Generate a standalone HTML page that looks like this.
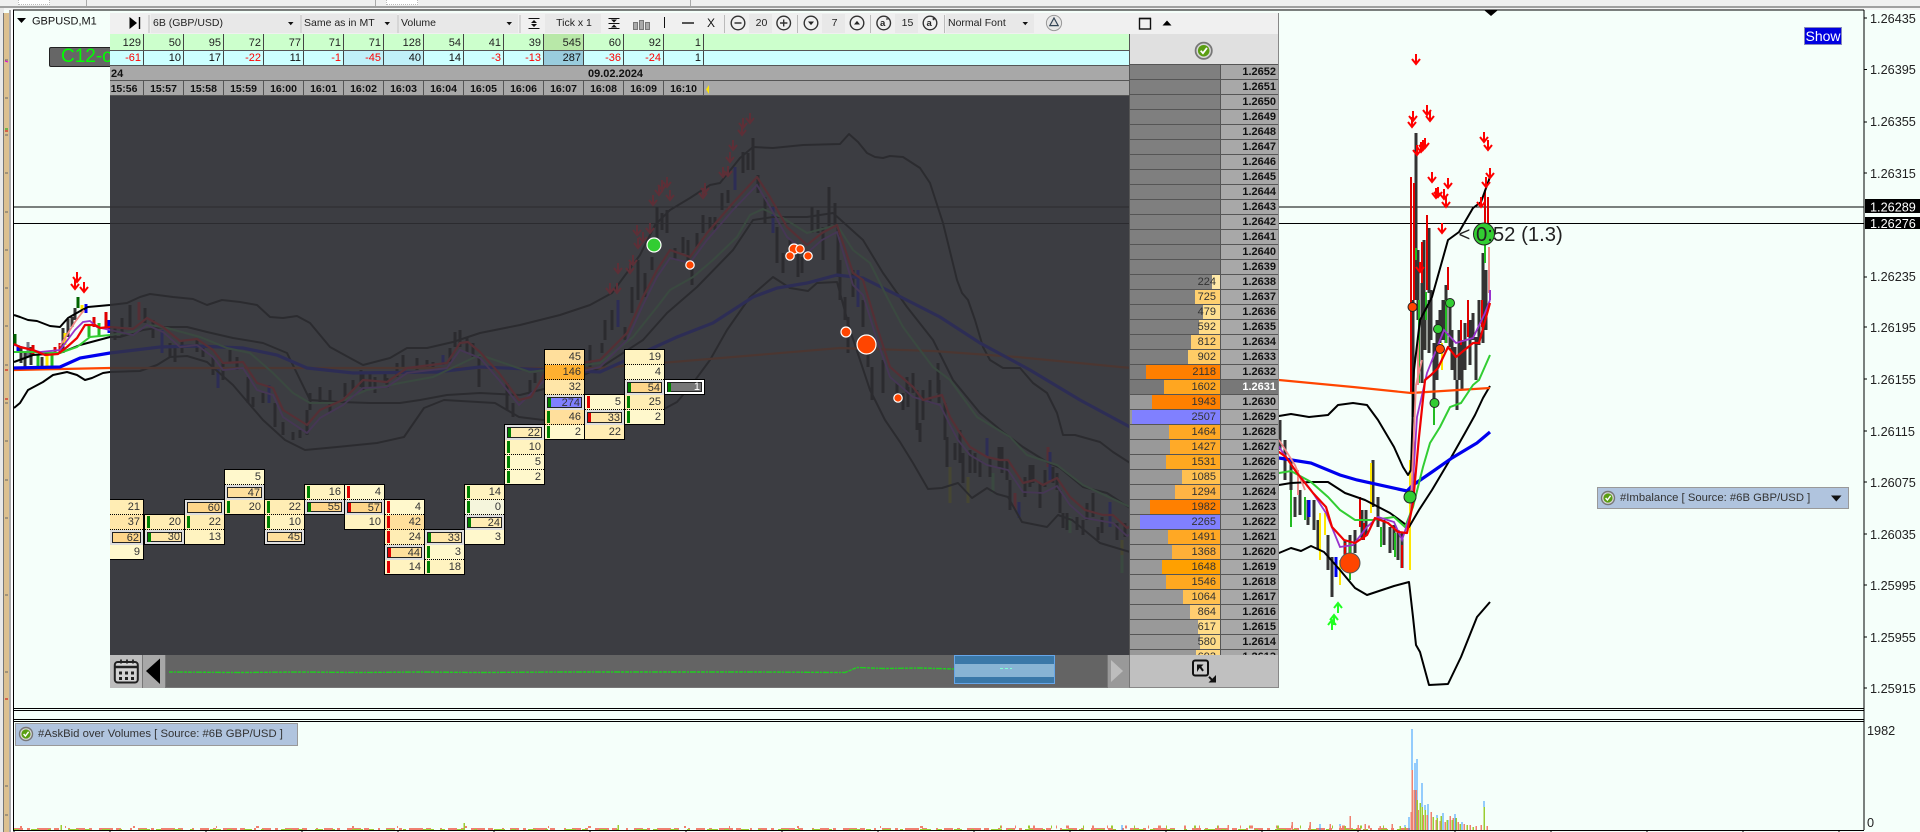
<!DOCTYPE html>
<html><head><meta charset="utf-8"><title>GBPUSD,M1</title>
<style>
html,body{margin:0;padding:0;width:1920px;height:832px;overflow:hidden;background:#f5fffa;font-family:"Liberation Sans",sans-serif}
.ab{position:absolute}
svg{position:absolute;left:0;top:0}
.lt{--c:#333;--k:#000;--r:#e00000;--m:#f00000;--g:#22bb22;--l:#32cd32;--y:#ffe600;--b:#0000ee;--p:#f08888;--v:#9932cc;--o:#ff4500;--a:#ff0000;--dg:#006400;--gy:#778}
.dm{--c:#000;--k:#000;--r:#960e14;--m:#960e14;--g:#356b3b;--l:#356b3b;--y:#60600a;--b:#070786;--p:#8a3a40;--v:#602786;--o:#722709;--a:#b20e1e;--dg:#0a3a10;--gy:#222}
.sc{stroke:var(--c)}.sk{stroke:var(--k)}.sr{stroke:var(--r)}.sm{stroke:var(--m)}.sg{stroke:var(--g)}.sl{stroke:var(--l)}.sy{stroke:var(--y)}.sb{stroke:var(--b)}.sp{stroke:var(--p)}.sv{stroke:var(--v)}.so{stroke:var(--o)}.sa{stroke:var(--a)}.sd{stroke:var(--dg)}.sx{stroke:var(--gy)}
.row{position:absolute;left:110px;width:1019px;display:flex;font-size:11px;box-sizing:border-box}
.row div{width:40px;flex:none;box-sizing:border-box;border-right:1px solid #444;text-align:right;padding-right:2px}
.row div:first-child{width:34px}
.row div:last-child{width:auto;flex:1;border-right:0}
.gr{top:34px;height:17px;background:#ccffcc;color:#222;line-height:18px;border-bottom:1px solid #555}
.cy{top:51px;height:15px;background:#ccffff;color:#111;line-height:15px;border-bottom:1px solid #555}
.cy .n{color:#f00}
.tm{top:81px;height:15px;background:#a8a8a8;color:#111;line-height:16px;font-weight:bold;font-size:10.5px;border-bottom:1px solid #555}
.tm div{text-align:center;padding:0;border-right:1px solid #555}
.tm div:first-child{padding-right:5px}
.g{position:absolute;box-sizing:content-box;width:39px;border:1px solid #000;font-size:11px;color:#333}
.c{position:relative;height:14px;border-bottom:1px dotted #000;text-align:right;padding-right:3px;line-height:15px}
.c:last-child{border-bottom:0}
.x{height:15px;border-bottom:0;line-height:16px;padding-right:4px;box-shadow:inset 0 0 0 2px #ddd,inset 0 0 0 3px #222}
.x:last-child{height:14px;line-height:15px}
.c i{position:absolute;left:2px;top:1px;width:3px;height:12px;background:#008000}
.c i.r{background:#e00000}
.x i{left:3px;top:3px;height:9px}
.a{background:#fff8cc}.b{background:#fff3c0}.d{background:#ffedb4}.e{background:#ffe6a8}.f{background:#ffdf9c}.h{background:#ffd68a}
.pr{position:absolute;left:1129px;top:65px;width:150px;height:590px;overflow:hidden;background:#555;font-size:11px;border-left:1px solid #555;box-sizing:border-box}
.r{position:relative;height:15px}
.r s{position:absolute;left:0;top:0;width:90px;height:14px;background:#7f7f7f;text-decoration:none;overflow:hidden}
.r.l s{background:#999}
.r s b{position:absolute;right:0;top:0;height:14px;font-weight:normal}
.r s em{position:absolute;right:4px;top:0;font-style:normal;line-height:15px;color:#333}
.r u{position:absolute;left:91px;top:0;width:58px;height:14px;background:#a8a8a8;text-decoration:none;font-weight:bold;color:#111;text-align:right;padding-right:3px;box-sizing:border-box;line-height:15px}
.r.cur u{background:#787878;color:#fff}
.box{position:absolute;background:#e8e8e8;top:14px;height:19px;font-size:10.5px;line-height:19px;color:#222;padding-left:2px;box-sizing:border-box}
.lbl{position:absolute;background:#b0c4de;border:1px solid #999;box-sizing:border-box;color:#333;font-size:11.3px}
</style></head>
<body>
<!-- top strip -->
<div class="ab" style="left:0;top:0;width:1920px;height:6px;background:#f0f0f0"></div>
<div class="ab" style="left:0;top:6px;width:1920px;height:2px;background:#a0a0a0"></div>
<div class="ab" style="left:0;top:8px;width:1920px;height:2px;background:#f4f4f4"></div>
<div class="ab" style="left:18px;top:0;width:30px;height:4px;background:#fff;border:1px dotted #bbb;border-top:0"></div>
<div class="ab" style="left:386px;top:0;width:30px;height:4px;background:#fff;border:1px dotted #bbb;border-top:0"></div>
<div class="ab" style="left:86px;top:0;width:1px;height:6px;background:#aaa"></div>
<div class="ab" style="left:375px;top:0;width:1px;height:6px;background:#aaa"></div>
<div class="ab" style="left:690px;top:0;width:1px;height:6px;background:#aaa"></div>
<!-- left strip -->
<div class="ab" style="left:0;top:8px;width:4px;height:824px;background:#e8e8e8"></div>
<div class="ab" style="left:3px;top:13px;width:6px;height:819px;background:#dcc08f;border-left:1px solid #777;box-sizing:border-box"></div>
<div class="ab" style="left:9px;top:10px;width:2px;height:822px;background:#aaa"></div>
<div class="ab" style="left:11px;top:10px;width:2px;height:822px;background:#fff"></div>

<!-- main chart -->
<svg width="1920" height="832" viewBox="0 0 1920 832" fill="none">
<defs>
<g id="da"><path d="M0 -5V4M-4 0L0 5L4 0" stroke-width="2"/></g>
<g id="ua"><path d="M0 5V-4M-4 0L0 -5L4 0" stroke-width="2"/></g>
<clipPath id="pc"><rect x="110" y="95" width="1019" height="560"/></clipPath>
<g id="ch" fill="none">
<path class="sk" d="M14 207H1864M14 223.5H1864" stroke-width="1.3" shape-rendering="crispEdges"/>
<!-- candles -->
<g stroke-width="3" shape-rendering="crispEdges">
<path class="sc" d="M21 347V363M25 353V367M31 347V365M42 357V367M63 328V353M68 319V337M72 317V327M75 308V320M115 327V340M122 318V337M130 305V327M145 308V323M153 320V338M170 343V357M175 347V362M182 340V353M197 340V352M203 347V357M213 357V375M223 363V380M230 350V363M237 357V370M248 377V403M253 397V407M263 393V403M275 403V427M283 422V435M293 432V440M300 430V438M307 410V435M310 393V410M320 387V403M330 390V412M345 383V397M353 380V390M361 370V387M363 373V390M370 373V388M375 377V393M385 373V383M387 378V388M397 363V377M403 355V368M417 358V370M427 360V368M433 362V372M450 348V362M455 332V347M460 330V347M467 338V353M473 343V357M479 355V387M507 383V410M513 403V417M530 380V395M535 373V383M590 345V370M602 343V353M605 320V340M612 310V330M625 327V340M632 287V313M638 260V300M645 273V297M652 257V270M657 207V240M662 213V230M667 210V233M675 248V260M683 237V253M688 240V260M692 267V285M697 233V247M703 215V233M710 217V230M715 217V230M722 193V210M728 190V203M743 152V173M748 153V170M753 138V170M758 175V193M765 197V223M777 227V263M783 253V273M790 240V260M798 250V277M802 257V273M812 207V233M818 210V233M823 227V260M829 187V227M835 203V227M838 227V277M840 260V300M845 297V320M848 317V353M853 270V297M863 300V327M868 353V367M872 367V400M883 360V393M897 383V400M907 377V393M913 373V393M930 380V393M938 363V393M903 393V410M908 387V407M917 390V430M920 423V442M923 390V420M930 380V403M939 380V403M945 403V440M947 437V467M955 443V460M960 430V463M963 453V483M970 450V473M975 453V473M980 460V477M990 457V477M999 447V467M1002 447V473M1007 460V480M1010 480V510M1025 477V497M1030 465V487M1033 465V483M1040 483V508M1045 470V487M1053 467V483M1057 473V490M1060 490V513M1063 513V528M1067 513V530M1077 517V530M1083 520V535M1087 503V520M1093 493V517M1098 527V540M1102 517V533M1117 523V540M1125 523V537M1280 420V450M1285 440V480M1291 460V490M1295 497V517M1300 490V515M1308 500V525M1314 500V530M1318 520V550M1328 535V570M1332 557V597M1345 540V570M1350 535V560M1355 530V553M1362 510V540M1366 510V535M1373 460V507M1378 497V527M1384 520V545M1390 527V553M1394 525V550M1398 530V560M1402 533V568M1413 300V417M1413 433V500M1416 133V300M1418 250V320M1422 283V383M1424 240V300M1425 300V350M1429 228V293M1429 300V353M1431 290V340M1434 343V407M1437 320V380M1440 310V343M1443 300V340M1446 285V343M1450 303V347M1452 330V370M1455 347V380M1457 380V410M1459 330V380M1462 340V390M1465 323V370M1470 320V365M1473 313V340M1476 337V380M1479 300V345M1483 253V343M1486 270V330"/>
<path class="sd" d="M15 334V345M78 297V308"/>
<path class="sx" d="M28 342V357"/>
<path class="sr" d="M33 345V355M55 347V355M60 343V353M94 317V327M106 312V327M139 302V320M1015 493V510M1048 447V467"/>
<path class="sr" stroke-width="2.4" d="M1345 543V567M1360 497V527M1364 523V540M1402 545V568M1411 177V393M1414 183V300M1427 215V290M1422 242V283M1448 267V290M1485 190V223M1488 197V223M1461 320V345M1468 300V337M1482 300V327"/>
<path class="sg" d="M38 355V368M52 352V367M89 325V337M99 323V337M993 473V493M1070 517V533M1122 550V573"/>
<path class="sg" stroke-width="2" d="M1291 490V527M1305 497V520M1350 543V580M1381 527V547M1395 533V557M1416 248V260M1419 300V383M1426 292V320M1434 407V425M1446 300V343M1485 245V263"/>
<path class="sy" d="M47 355V367M65 333V345M82 305V313M950 467V503M968 477V503M1122 540V555"/>
<path class="sy" stroke-width="2" d="M1320 513V560M1325 513V535M1340 560V585M1371 463V513M1410 460V570M1442 343V370"/>
<path class="sb" d="M18 345V352M86 304V313M109 320V333M162 330V353M218 367V388M269 385V403M443 355V365M618 300V327M735 167V190M773 207V233M858 270V307M987 438V457M1019 502V518M1050 452V480M1110 502V527M1309 500V517M1336 557V577"/>
<path class="sp" stroke-width="2" d="M1298 470V495M1418 340V385M1489 247V293"/>
<path class="sv" stroke-width="2" d="M1490 290V300"/>
</g>
<!-- bands -->
<g class="sk" stroke-width="2" stroke-linejoin="round">
<polyline points="14,315 20,317 28,320 37,321 50,326 60,327 68,318 82,310 88,307 110,305 127,303 140,297 150,294 173,297 193,299 207,305 222,300 240,302 257,305 270,317 283,318 297,316 310,323 330,347 350,358 363,365 390,358 407,348 427,348 453,342 480,333 520,325 560,315 590,305 612,293 640,255 655,225 670,210 690,198 710,185 720,183 740,158 753,147 773,148 803,145 840,144 849,134 858,142 867,153 875,157 883,158 890,156 903,157 920,168 930,183 943,223 957,280 962,293 968,300 975,320 983,347 990,360 1003,368 1020,368 1033,383 1047,393 1057,413 1063,435 1075,435 1100,442 1113,452 1130,463 1279,416 1291,414 1309,417 1328,415 1338,405 1353,403 1367,405 1378,420 1394,447 1403,467 1408,475 1411,470 1414,370 1420,320 1432,297 1448,240 1459,232 1473,208 1481,202 1490,177"/>
<polyline points="14,362 33,355 60,353 80,345 110,337 120,337 143,330 163,327 187,327 207,332 233,338 263,343 287,353 310,400 340,402 370,403 400,403 420,400 447,395 480,393 520,395 560,385 600,368 643,340 667,313 697,287 733,250 753,220 773,217 807,217 833,213 863,240 883,273 907,307 933,340 953,380 980,413 1003,432 1023,447 1047,462 1060,468 1083,487 1107,493 1130,508 1279,485 1291,483 1311,482 1328,482 1345,493 1365,500 1390,513 1409,527 1419,510 1432,490 1448,463 1465,433 1475,415 1483,398 1490,386"/>
<polyline points="14,408 20,403 28,390 43,382 53,375 67,372 77,375 85,380 92,378 103,373 110,372 140,371 157,365 170,357 187,356 207,362 233,385 263,420 285,440 305,450 337,447 377,443 404,437 424,408 444,400 495,403 519,417 543,420 600,428 640,422 677,402 693,383 710,360 727,330 750,297 773,277 790,288 808,291 817,283 837,282 850,330 870,390 885,420 900,442 913,463 928,489 942,488 958,483 972,498 987,488 997,494 1008,497 1022,522 1047,527 1058,515 1072,520 1100,543 1130,552 1279,553 1291,548 1301,551 1311,546 1324,552 1340,570 1355,588 1367,595 1382,590 1394,586 1409,582 1413,617 1416,645 1420,652 1429,685 1448,684 1461,657 1477,617 1490,602"/>
</g>
<polyline class="so" stroke-width="2.2" points="14,370 110,368 480,368 600,368 733,357 840,348 933,351 1017,357 1120,367 1279,380 1353,387 1411,393 1490,388"/>
<polyline class="sb" stroke-width="3.2" points="14,368 60,367 80,358 110,353 160,347 197,346 243,348 277,355 307,368 353,373 437,372 480,367 600,372 677,337 713,323 753,297 777,288 807,283 837,275 863,278 893,293 940,317 980,343 1030,370 1080,400 1130,427 1279,458 1311,463 1340,475 1357,480 1407,491 1413,485 1432,472 1452,458 1477,443 1490,432"/>
<polyline class="sl" stroke-width="2" points="14,352 33,352 60,353 77,347 90,337 110,335 133,332 150,325 167,328 200,337 227,348 250,353 273,373 293,393 310,403 337,403 367,390 400,383 433,377 473,358 480,355 530,372 600,363 633,337 657,307 670,290 693,277 713,260 737,237 750,215 763,209 783,218 807,233 837,225 853,250 870,263 887,297 903,327 920,350 933,367 950,380 977,417 1010,437 1027,455 1057,465 1083,485 1130,507 1279,473 1291,471 1311,482 1328,497 1340,510 1355,520 1373,520 1394,517 1405,527 1413,507 1423,467 1430,443 1440,427 1450,407 1461,403 1473,385 1479,380 1490,355"/>
<polyline class="sv" stroke-width="1.8" points="14,345 40,352 60,350 75,330 83,322 90,321 97,327 110,330 133,335 147,325 163,332 180,347 197,345 213,357 223,370 243,368 257,390 273,395 283,417 307,433 320,418 343,405 363,388 387,387 407,373 447,368 460,350 480,358 499,380 519,405 545,380 600,367 627,340 643,305 657,277 670,258 690,263 707,240 733,210 757,185 770,207 787,237 807,253 822,240 837,232 853,285 863,295 877,340 890,377 913,397 940,405 950,425 958,440 970,455 987,465 1008,470 1023,492 1043,493 1057,486 1070,505 1085,518 1113,523 1127,536 1279,447 1295,470 1311,490 1326,513 1340,547 1353,545 1367,527 1378,517 1394,522 1402,540 1411,513 1417,417 1427,373 1444,330 1456,343 1473,338 1485,313 1490,300"/>
<polyline class="sp" stroke-width="1.8" points="60,346 75,322 84,310"/>
<polyline class="sp" stroke-width="1.8" points="1279,440 1295,465 1305,490"/>
<polyline class="sp" stroke-width="1.8" points="1411,500 1416,385 1422,360"/>
<polyline class="sm" stroke-width="2.2" stroke-linejoin="round" points="14,344 20,347 33,350 45,355 58,354 67,347 77,338 85,325 95,325 100,328 110,327 133,329 147,318 163,327 180,341 197,339 213,350 223,363 243,362 257,383 273,388 283,410 307,425 320,410 343,400 363,380 387,382 407,368 447,363 460,343 468,342 480,352 499,373 519,400 531,397 545,373 570,365 600,360 627,333 643,297 657,270 670,250 690,257 707,233 733,203 757,177 770,197 787,227 807,245 822,233 837,225 853,273 863,280 877,327 890,367 913,387 923,400 942,395 950,417 958,430 970,447 987,457 1000,460 1008,460 1023,483 1035,480 1043,485 1057,478 1070,497 1085,510 1103,515 1113,515 1127,528 1279,452 1286,457 1297,473 1313,493 1326,507 1332,527 1344,540 1355,543 1367,535 1375,518 1388,523 1398,532 1407,533 1413,503 1419,437 1425,380 1431,375 1438,368 1448,347 1456,357 1473,343 1479,343 1490,303"/>
<!-- arrows -->
<g class="sa">
<use href="#da" x="77" y="277"/><use href="#da" x="75" y="284"/><use href="#da" x="84" y="287"/>
<use href="#da" x="1416" y="59"/><use href="#da" x="1413" y="116"/><use href="#da" x="1412" y="122"/><use href="#da" x="1427" y="110"/><use href="#da" x="1430" y="116"/><use href="#da" x="1417" y="150"/><use href="#da" x="1421" y="147"/><use href="#da" x="1423" y="145"/><use href="#da" x="1425" y="143"/><use href="#da" x="1432" y="177"/><use href="#da" x="1436" y="193"/><use href="#da" x="1438" y="192"/><use href="#da" x="1444" y="194"/><use href="#da" x="1448" y="183"/><use href="#da" x="1446" y="202"/><use href="#da" x="1442" y="228"/><use href="#da" x="1420" y="267"/><use href="#da" x="1484" y="137"/><use href="#da" x="1488" y="145"/><use href="#da" x="1490" y="173"/><use href="#da" x="1486" y="182"/><use href="#da" x="1481" y="202"/>
<use href="#da" x="750" y="118"/><use href="#da" x="743" y="123"/><use href="#da" x="742" y="130"/><use href="#da" x="733" y="145"/><use href="#da" x="730" y="157"/><use href="#da" x="723" y="172"/><use href="#da" x="728" y="171"/><use href="#da" x="705" y="188"/><use href="#da" x="703" y="193"/><use href="#da" x="667" y="182"/><use href="#da" x="662" y="185"/><use href="#da" x="659" y="190"/><use href="#da" x="653" y="200"/><use href="#da" x="670" y="195"/><use href="#da" x="637" y="230"/><use href="#da" x="643" y="237"/><use href="#da" x="650" y="228"/><use href="#da" x="638" y="243"/><use href="#da" x="633" y="260"/><use href="#da" x="618" y="268"/><use href="#da" x="630" y="268"/><use href="#da" x="610" y="288"/><use href="#da" x="617" y="288"/>
</g>
</g>
</defs>
<!-- frame lines -->
<path d="M13 10H1864M13.5 10V830M1864 10V830M13 708.5H1864M13 710.5H1864M13 719.5H1864M13 721.5H1864M13 830.5H1864" stroke="#000" stroke-width="1.2" shape-rendering="crispEdges"/>
<path d="M14 832v-2M110 832v-2M206 832v-2M302 832v-2M398 832v-2M494 832v-2M590 832v-2M686 832v-2M782 832v-2M878 832v-2M974 832v-2M1070 832v-2M1166 832v-2M1262 832v-2M1358 832v-2M1455 832v-2M1551 832v-2M1647 832v-2M1743 832v-2M1839 832v-2" stroke="#000"/>
<path d="M1491 16l-7 -6h14z" fill="#000"/>
<path d="M5 60h3M5 98h3M5 135h3M5 173h3M5 212h3M5 250h3M5 288h3M5 326h3M5 365h3M5 403h3M5 441h3M5 480h3M5 518h3M5 595h3M5 672h3M5 786h3M5 815h3" stroke="#666" shape-rendering="crispEdges"/>
<path d="M5 61l3 1" stroke="#d0d"/><path d="M5 129h3" stroke="#0a0"/><path d="M5 131h3M5 370h3M5 399h3M5 699h3" stroke="#c00"/>
<use href="#ch" class="lt"/>
<g stroke="#22ff22">
<use href="#ua" x="1338" y="608"/><use href="#ua" x="1334" y="620"/><use href="#ua" x="1332" y="625"/>
</g>
<g stroke="#222" stroke-width="1">
<circle cx="1350" cy="563" r="10" fill="#ff4500" stroke="#555"/>
<circle cx="1410" cy="497" r="6" fill="#32cd32"/>
<circle cx="1412.5" cy="307" r="4.5" fill="#ff4500"/>
<circle cx="1438" cy="329" r="4.5" fill="#32cd32"/>
<circle cx="1440" cy="349" r="4.5" fill="#ff4500"/>
<circle cx="1450" cy="303" r="4.5" fill="#32cd32"/>
<circle cx="1434.5" cy="403" r="4.5" fill="#32cd32"/>
</g>
<ellipse cx="1484" cy="234" rx="10.5" ry="11" fill="#32cd32" stroke="#222"/>
<text x="1458.5" y="241" font-family="Liberation Sans" font-size="20.3" fill="#222">&lt; 0:52 (1.3)</text>
<!-- volumes -->
<g shape-rendering="crispEdges">
<path d="M14 829H1410" stroke="#f08070" stroke-width="2" stroke-dasharray="9 4 3 7 14 3 5 9 2 6"/>
<path d="M14 829.5H1410" stroke="#9acd32" stroke-width="1" stroke-dasharray="5 12 8 9 3 17 11 6"/>
<path d="M20 827H1000" stroke="#f08070" stroke-width="2" stroke-dasharray="2 43 1 67 2 81 1 39 3 93"/>
<path d="M1000 827H1400" stroke="#f08070" stroke-width="3" stroke-dasharray="2 13 1 17 2 21 1 9 3 23"/>
<path d="M1000 827H1400" stroke="#9acd32" stroke-width="3" stroke-dasharray="1 27 2 21 1 31"/>
<path stroke="#3399ff" d="M1412 830V729M1415 830V763M1417 830V759M1422 830V783M1425 830V805M1428 830V804M1437 830V815M1443 830V813M1448 830V820M1455 830V814M1462 830V822M1484 830V801M1405 830V825M1409 830V817M1122 830V825M1340 830V824M1320 830V824"/>
<path stroke="#f08070" stroke-width="1.5" d="M1412 830V770M1414 830V790M1416 830V790M1418 830V810M1411 830V812M1423 830V815M1427 830V815M1431 830V812M1436 830V820M1440 830V821M1445 830V822M1450 830V816M1453 830V818M1458 830V822M1464 830V824M1470 830V825M1476 830V826M1481 830V825M1487 830V826M1350 830V816M1358 830V825M1365 830V824M1380 830V826M1392 830V824M1292 830V822M1228 830V825M1310 830V822M1330 830V824M1340 830V826"/>
<path stroke="#9acd32" stroke-width="1.5" d="M1417 830V800M1420 830V803M1422 830V807M1425 830V810M1433 830V817M1437 830V818M1441 830V816M1447 830V820M1452 830V820M1456 830V818M1460 830V824M1467 830V825M1473 830V827M1484 830V807M1400 830V826M1405 830V827M1345 830V826M61 830V825M464 830V823M618 830V825"/>
</g>
<!-- axis -->
<path d="M1864 18h3M1864 69.5h3M1864 122h3M1864 173h3M1864 277h3M1864 327h3M1864 379h3M1864 431h3M1864 482h3M1864 534h3M1864 585h3M1864 637h3M1864 688h3" stroke="#000" shape-rendering="crispEdges"/>
<rect x="1865" y="199" width="55" height="14" fill="#000"/><rect x="1865" y="217" width="55" height="12" fill="#000"/>
<g font-family="Liberation Sans" font-size="12.7" fill="#222">
<text x="1870" y="23">1.26435</text><text x="1870" y="74">1.26395</text><text x="1870" y="126">1.26355</text><text x="1870" y="178">1.26315</text>
<text x="1870" y="211.5" fill="#fff">1.26289</text><text x="1870" y="228" fill="#fff">1.26276</text>
<text x="1870" y="281">1.26235</text><text x="1870" y="332">1.26195</text><text x="1870" y="384">1.26155</text><text x="1870" y="436">1.26115</text><text x="1870" y="487">1.26075</text><text x="1870" y="539">1.26035</text><text x="1870" y="590">1.25995</text><text x="1870" y="642">1.25955</text><text x="1870" y="693">1.25915</text>
<text x="1867" y="735">1982</text><text x="1867" y="827">0</text>
</g>
<text x="32" y="24.5" font-family="Liberation Sans" font-size="11" fill="#111">GBPUSD,M1</text>
<path d="M17 18h9l-4.5 5z" fill="#000"/>
</svg>

<div class="ab" style="left:1804px;top:27px;width:38px;height:18px;background:#0000e0;border:1px solid #88b;box-sizing:border-box;color:#fff;font-size:14px;line-height:16px;text-align:center">Show</div>
<div class="ab" style="left:49px;top:47px;width:100px;height:20px;background:#666;border:1px solid #222;border-radius:2px;box-sizing:border-box;color:#00ff00;font-size:19px;line-height:18px;padding-left:11px;overflow:hidden;white-space:nowrap">C12-or</div>

<div class="lbl" style="left:1597px;top:487px;width:252px;height:22px;line-height:20px;padding-left:22px">#Imbalance [ Source: #6B GBP/USD ]</div>
<div class="lbl" style="left:15px;top:723px;width:283px;height:23px;line-height:21px;padding-left:22px">#AskBid over Volumes [ Source: #6B GBP/USD ]</div>

<!-- panel dark area with dimmed chart -->
<div class="ab" style="left:110px;top:95px;width:1019px;height:560px;background:#3c3d42"></div>
<svg width="1920" height="832" viewBox="0 0 1920 832" fill="none"><g clip-path="url(#pc)" opacity=".28"><use href="#ch" class="dm"/></g></svg>

<!-- toolbar -->
<div class="ab" style="left:110px;top:13px;width:1169px;height:21px;background:#f0f0f0;border-bottom:1px solid #555;box-sizing:content-box"></div>
<div class="box" style="left:151px;width:149px">6B (GBP/USD)</div>
<div class="box" style="left:302px;width:95px">Same as in MT</div>
<div class="box" style="left:399px;width:119px">Volume</div>
<div class="box" style="left:545px;width:56px;text-align:center">Tick x 1</div>
<div class="box" style="left:749px;width:23px;text-align:center">20</div>
<div class="box" style="left:822px;width:23px;text-align:center">7</div>
<div class="box" style="left:895px;width:23px;text-align:center">15</div>
<div class="box" style="left:946px;width:88px">Normal Font</div>

<!-- header rows -->
<div class="row gr"><div>129</div><div>50</div><div>95</div><div>72</div><div>77</div><div>71</div><div>71</div><div>128</div><div>54</div><div>41</div><div>39</div><div style="background:#b8e8a8">545</div><div>60</div><div>92</div><div>1</div><div></div></div>
<div class="row cy"><div class="n">-61</div><div>10</div><div>17</div><div class="n">-22</div><div>11</div><div class="n">-1</div><div class="n" style="background:#c0f0f8">-45</div><div style="background:#c0f0f8">40</div><div>14</div><div class="n">-3</div><div class="n">-13</div><div style="background:#99ccdd">287</div><div class="n">-36</div><div class="n">-24</div><div>1</div><div></div></div>
<div class="ab" style="left:110px;top:66px;width:1019px;height:15px;background:#a8a8a8;border-bottom:1px solid #555;box-sizing:border-box;font-size:11px;font-weight:bold;color:#111;line-height:16px"><span class="ab" style="left:1px">24</span><span class="ab" style="left:478px;white-space:nowrap">09.02.2024</span></div>
<div class="row tm"><div>15:56</div><div>15:57</div><div>15:58</div><div>15:59</div><div>16:00</div><div>16:01</div><div>16:02</div><div>16:03</div><div>16:04</div><div>16:05</div><div>16:06</div><div>16:07</div><div>16:08</div><div>16:09</div><div>16:10</div><div></div></div>
<div class="ab" style="left:1129px;top:34px;width:150px;height:31px;background:#e0e0e0;border-left:1px solid #555;border-bottom:1px solid #555;box-sizing:border-box"></div>

<!-- price ladder -->
<div class="pr">
<div class="r"><s></s><u>1.2652</u></div>
<div class="r"><s></s><u>1.2651</u></div>
<div class="r"><s></s><u>1.2650</u></div>
<div class="r"><s></s><u>1.2649</u></div>
<div class="r"><s></s><u>1.2648</u></div>
<div class="r"><s></s><u>1.2647</u></div>
<div class="r"><s></s><u>1.2646</u></div>
<div class="r"><s></s><u>1.2645</u></div>
<div class="r"><s></s><u>1.2644</u></div>
<div class="r"><s></s><u>1.2643</u></div>
<div class="r"><s></s><u>1.2642</u></div>
<div class="r"><s></s><u>1.2641</u></div>
<div class="r"><s></s><u>1.2640</u></div>
<div class="r"><s></s><u>1.2639</u></div>
<div class="r"><s><b style="width:8px;background:#ffe9a8"></b><em>224</em></s><u>1.2638</u></div>
<div class="r"><s><b style="width:25px;background:#ffd070"></b><em>725</em></s><u>1.2637</u></div>
<div class="r"><s><b style="width:17px;background:#ffe090"></b><em>479</em></s><u>1.2636</u></div>
<div class="r"><s><b style="width:21px;background:#ffdc88"></b><em>592</em></s><u>1.2635</u></div>
<div class="r"><s><b style="width:29px;background:#ffcf70"></b><em>812</em></s><u>1.2634</u></div>
<div class="r"><s><b style="width:32px;background:#ffcc66"></b><em>902</em></s><u>1.2633</u></div>
<div class="r"><s><b style="width:74px;background:#ff7f00"></b><em>2118</em></s><u>1.2632</u></div>
<div class="r cur"><s style="background:#787878"><b style="width:56px;background:#ffa620"></b><em>1602</em></s><u>1.2631</u></div>
<div class="r l"><s><b style="width:68px;background:#ff8000"></b><em>1943</em></s><u>1.2630</u></div>
<div class="r l"><s><b style="width:88px;background:#8080ff"></b><em>2507</em></s><u>1.2629</u></div>
<div class="r l"><s><b style="width:51px;background:#ffa824"></b><em>1464</em></s><u>1.2628</u></div>
<div class="r l"><s><b style="width:50px;background:#ffaa28"></b><em>1427</em></s><u>1.2627</u></div>
<div class="r l"><s><b style="width:54px;background:#ffa820"></b><em>1531</em></s><u>1.2626</u></div>
<div class="r l"><s><b style="width:38px;background:#ffc050"></b><em>1085</em></s><u>1.2625</u></div>
<div class="r l"><s><b style="width:45px;background:#ffb444"></b><em>1294</em></s><u>1.2624</u></div>
<div class="r l"><s><b style="width:70px;background:#ff8000"></b><em>1982</em></s><u>1.2623</u></div>
<div class="r l"><s><b style="width:80px;background:#8080ff"></b><em>2265</em></s><u>1.2622</u></div>
<div class="r l"><s><b style="width:52px;background:#ffa824"></b><em>1491</em></s><u>1.2621</u></div>
<div class="r l"><s><b style="width:48px;background:#ffb038"></b><em>1368</em></s><u>1.2620</u></div>
<div class="r l"><s><b style="width:58px;background:#ffa000"></b><em>1648</em></s><u>1.2619</u></div>
<div class="r l"><s><b style="width:54px;background:#ffa820"></b><em>1546</em></s><u>1.2618</u></div>
<div class="r l"><s><b style="width:37px;background:#ffc050"></b><em>1064</em></s><u>1.2617</u></div>
<div class="r l"><s><b style="width:30px;background:#ffce70"></b><em>864</em></s><u>1.2616</u></div>
<div class="r l"><s><b style="width:22px;background:#ffdc88"></b><em>617</em></s><u>1.2615</u></div>
<div class="r l"><s><b style="width:20px;background:#ffdc88"></b><em>580</em></s><u>1.2614</u></div>
<div class="r l"><s><b style="width:24px;background:#ffd880"></b><em>693</em></s><u>1.2613</u></div>
</div>

<!-- footprint cells -->
<div class="g" style="left:110px;top:499px;width:33px;border-left:0"><div class="c d">21</div><div class="c e">37</div><div class="c x h">62</div><div class="c a">9</div></div>
<div class="g" style="left:144px;top:514px"><div class="c d"><i></i>20</div><div class="c x e"><i></i>30</div></div>
<div class="g" style="left:184px;top:499px"><div class="c x h">60</div><div class="c d"><i></i>22</div><div class="c b">13</div></div>
<div class="g" style="left:224px;top:469px"><div class="c a">5</div><div class="c x f">47</div><div class="c d"><i></i>20</div></div>
<div class="g" style="left:264px;top:499px"><div class="c d"><i></i>22</div><div class="c b"><i></i>10</div><div class="c x f">45</div></div>
<div class="g" style="left:304px;top:484px"><div class="c b"><i></i>16</div><div class="c x h"><i></i>55</div></div>
<div class="g" style="left:344px;top:484px"><div class="c a"><i class="r"></i>4</div><div class="c x h"><i class="r"></i>57</div><div class="c b">10</div></div>
<div class="g" style="left:384px;top:499px"><div class="c a"><i class="r"></i>4</div><div class="c f"><i class="r"></i>42</div><div class="c d"><i class="r"></i>24</div><div class="c x f"><i class="r"></i>44</div><div class="c b"><i class="r"></i>14</div></div>
<div class="g" style="left:424px;top:529px"><div class="c x e"><i></i>33</div><div class="c a"><i></i>3</div><div class="c b"><i></i>18</div></div>
<div class="g" style="left:464px;top:484px"><div class="c b"><i></i>14</div><div class="c" style="background:#f5f5dc"><i></i>0</div><div class="c x d"><i></i>24</div><div class="c a">3</div></div>
<div class="g" style="left:504px;top:424px"><div class="c x d"><i></i>22</div><div class="c b"><i></i>10</div><div class="c a"><i></i>5</div><div class="c a"><i></i>2</div></div>
<div class="g" style="left:544px;top:349px"><div class="c f">45</div><div class="c" style="background:#ffb030">146</div><div class="c e">32</div><div class="c x" style="background:#8080ff"><i></i>274</div><div class="c f"><i></i>46</div><div class="c a"><i></i>2</div></div>
<div class="g" style="left:584px;top:394px"><div class="c a"><i class="r"></i>5</div><div class="c x e"><i class="r"></i>33</div><div class="c d">22</div></div>
<div class="g" style="left:624px;top:349px"><div class="c b">19</div><div class="c a">4</div><div class="c x h"><i></i>54</div><div class="c d"><i></i>25</div><div class="c a"><i></i>2</div></div>
<div class="g" style="left:664px;top:379px"><div class="c x" style="background:#777;color:#fff;box-shadow:inset 0 0 0 2px #fff,inset 0 0 0 3px #222"><i></i>1</div></div>

<!-- bottom bar -->
<div class="ab" style="left:110px;top:655px;width:1169px;height:33px;background:#646464;border-bottom:1.5px solid #777;box-sizing:border-box"></div>
<div class="ab" style="left:110px;top:655px;width:33px;height:33px;background:#bdbdbd;border-right:1px solid #777;box-sizing:border-box"></div>
<div class="ab" style="left:143px;top:655px;width:23px;height:33px;background:#a8a8a8;border-right:1px solid #777;box-sizing:border-box"></div>
<div class="ab" style="left:954px;top:655px;width:101px;height:29px;box-sizing:border-box;border:1px solid #66a6e8;background:linear-gradient(#3a78a8 0,#3a78a8 8px,#88b4d4 8px,#88b4d4 21px,#3a78a8 21px)"></div>
<div class="ab" style="left:1107px;top:655px;width:22px;height:33px;background:#999;border-left:1px solid #777;box-sizing:border-box"></div>
<div class="ab" style="left:1129px;top:655px;width:150px;height:33px;background:#c0c0c0;border-left:1px solid #777;border-right:1px solid #888;border-bottom:1px solid #888;box-sizing:border-box"></div>
<div class="ab" style="left:1278px;top:13px;width:1px;height:675px;background:#888"></div>

<!-- overlay icons -->
<svg width="1920" height="832" viewBox="0 0 1920 832" fill="none">
<defs>
<g id="ck"><circle r="6.5" fill="#d8d8d8" stroke="#777" stroke-width="1.4"/><circle r="4.6" fill="#5a9e12"/><path d="M-2.4 0L-.6 2L2.6 -2.2" stroke="#fff" stroke-width="1.4"/></g>
</defs>
<g stroke="#fff" stroke-width="1.2">
<circle cx="654" cy="245" r="7" fill="#32cd32"/>
<circle cx="690" cy="265" r="4.2" fill="#ff4500"/>
<circle cx="794" cy="249" r="5" fill="#ff4500"/>
<circle cx="790" cy="256" r="4.2" fill="#ff4500"/>
<circle cx="800" cy="249" r="4.2" fill="#ff4500"/>
<circle cx="808" cy="256" r="4.2" fill="#ff4500"/>
<circle cx="846" cy="332" r="5" fill="#ff4500"/>
<circle cx="866.5" cy="344.5" r="9.5" fill="#ff4500"/>
<circle cx="898" cy="398" r="4.2" fill="#ff4500"/>
</g>
<path d="M149 15v18M301 15v18M398 15v18M520 15v18M724.5 15v18M797.5 15v18M870.5 15v18M944.5 15v18" stroke="#bbb" shape-rendering="crispEdges"/>
<path d="M664.5 17v11" stroke="#111" shape-rendering="crispEdges"/>
<path d="M129.5 17V29L137 23z" fill="#000"/><path d="M139.5 17V29" stroke="#000" stroke-width="1.4"/>
<path d="M288 22h5.5l-2.75 3.2zM384.5 22h5.5l-2.75 3.2zM506.5 22h5.5l-2.75 3.2zM1022.5 22h5.5l-2.75 3.2z" fill="#111"/>
<path d="M528.5 18.5h11M528.5 28.5h11" stroke="#111" shape-rendering="crispEdges"/>
<path d="M534 20l-3 3h6zM534 27l-3-3h6z" fill="#111"/>
<path d="M608.5 18.5h11M608.5 23.5h11M608.5 28.5h11" stroke="#111" shape-rendering="crispEdges"/>
<path d="M614 22.5l-3-3h6zM614 24.5l-3 3h6z" fill="#111"/>
<path d="M633.5 22.5h4v7h-4zM639.5 20.5h4v9h-4zM645.5 22.5h4v7h-4z" fill="#aaa" stroke="#777" shape-rendering="crispEdges"/>
<path d="M682 23h12" stroke="#111" stroke-width="1.4"/>
<text x="707" y="27" font-family="Liberation Sans" font-size="12" fill="#111">X</text>
<g stroke="#333" stroke-width="1.4">
<circle cx="738" cy="23" r="6.8"/><circle cx="783.7" cy="23" r="6.8"/><circle cx="811" cy="23" r="6.8"/><circle cx="857" cy="23" r="6.8"/><circle cx="883.7" cy="23" r="6.8"/><circle cx="930" cy="23" r="6.8"/>
<path d="M734.5 23h7M780 23h7.4M783.7 19.5v7"/>
</g>
<path d="M808 21.5h6l-3 3.6zM854 24.5h6l-3-3.6z" fill="#222"/>
<g font-family="Liberation Sans" font-size="9.5" font-weight="bold" fill="#222">
<text x="880" y="26">a</text><text x="926.5" y="26">a</text></g>
<path d="M886 19h2.6M932.4 19h2.6M933.7 17.7v2.6" stroke="#222"/>
<circle cx="1054" cy="23" r="7.6" fill="#e8e8e8" stroke="#999"/>
<path d="M1054 18l4.2 7.6h-8.4z" fill="#ddd" stroke="#345" stroke-width="1.2"/>
<rect x="1139.5" y="18.5" width="11" height="10.5" stroke="#111" stroke-width="1.4" fill="#f0f0f0"/>
<path d="M1139 18.5h12" stroke="#111" stroke-width="1.5"/>
<path d="M1162.5 25.5h9l-4.5-5z" fill="#000"/>
<use href="#ck" transform="translate(1203.7 50.7) scale(1.25)"/>
<use href="#ck" transform="translate(26 734)"/>
<use href="#ck" transform="translate(1608 498)"/>
<path d="M1831 495.5h10.5l-5.2 6z" fill="#111"/>
<path d="M709 85v9l-3-4.5z" fill="#ffe600"/>
<rect x="114.8" y="662" width="23" height="20.5" rx="3" stroke="#222" stroke-width="2" fill="#d4d4d4"/>
<path d="M115 667h23" stroke="#222" stroke-width="2.4"/>
<path d="M121 659.5v4M127 659.5v4M133 659.5v4" stroke="#222" stroke-width="1.8"/>
<path d="M119 671.5h3v3h-3zM125 671.5h3v3h-3zM131 671.5h3v3h-3zM119 677h3v3h-3zM125 677h3v3h-3zM131 677h3v3h-3z" fill="#222"/>
<path d="M160 658.5V684L146 671z" fill="#000"/>
<path d="M1111 660V682L1123 671z" fill="#bdbdbd"/>
<polyline points="169,672 240,672.5 300,672 360,672.5 420,672 480,672.5 560,672 650,672 700,672 760,672 845,672.5 857,667.5 885,668.5 920,668 955,669" stroke="#22cc22" stroke-width="1.4" stroke-dasharray="4 1 2 1 6 1 3 1"/>
<path d="M1000 668.5h12" stroke="#7fffd4" stroke-dasharray="3 2"/>
<rect x="1193" y="660.5" width="15" height="15" rx="2" stroke="#111" stroke-width="2" fill="#ccc"/>
<path d="M1197 672v-7.5h6.5l-2.2 2.2 2.6 3.6-1.6 1.2-2.6-3.6z" fill="#111"/>
<path d="M1216 675v7.5h-7.5l2.4-2.4-2.6-2.6 1.4-1.4 2.6 2.6z" fill="#111"/>
</svg>
</body></html>
